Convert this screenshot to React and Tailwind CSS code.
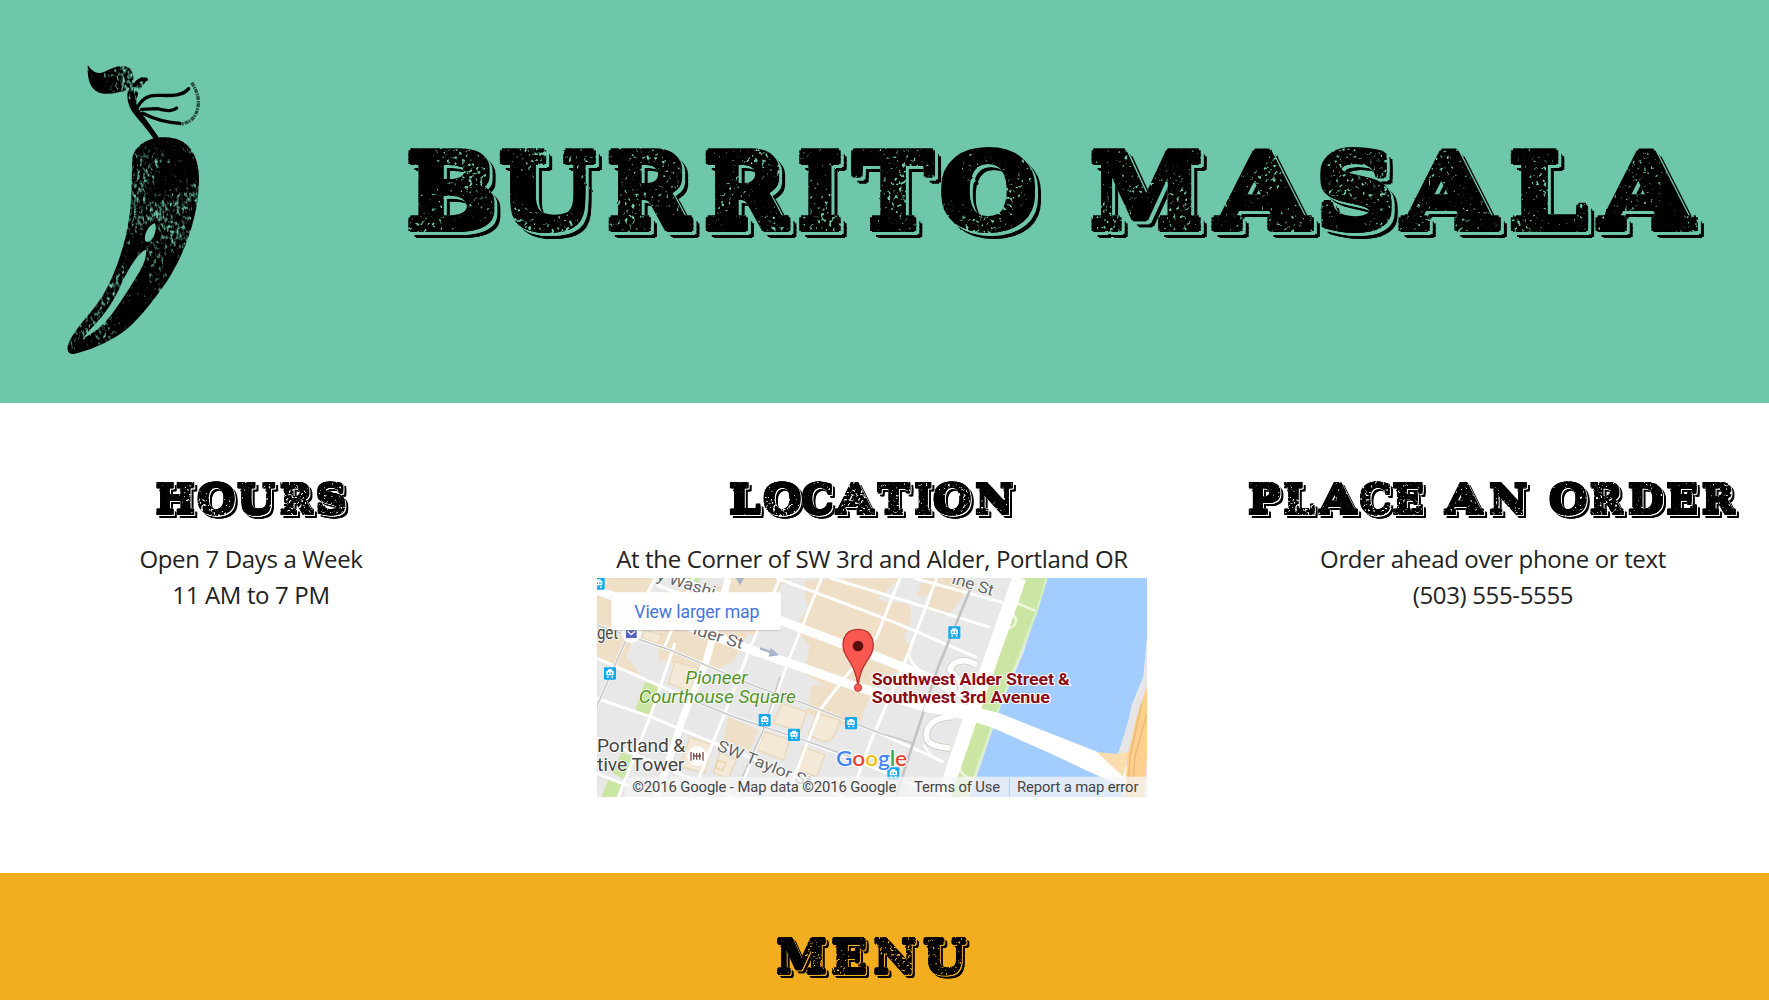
import React from "react";

/* Advance width and horizontal stretch of each display letter, in em. */
const LETTERS = {
  A: "w-[0.913em] scale-x-[1.07]",
  B: "w-[0.728em] scale-x-[0.96]",
  C: "w-[0.72em] scale-x-[0.91]",
  D: "w-[0.87em] scale-x-[0.92]",
  E: "w-[0.75em] scale-x-[0.94]",
  H: "w-[0.934em] scale-x-[0.94]",
  I: "w-[0.45em] scale-x-[0.88]",
  L: "w-[0.804em] scale-x-[1]",
  M: "w-[1.12em] scale-x-[0.9]",
  N: "w-[1.02em] scale-x-[0.94]",
  O: "w-[0.838em] scale-x-[0.99]",
  P: "w-[0.71em] scale-x-[0.97]",
  R: "w-[0.843em] scale-x-[0.89]",
  S: "w-[0.709em] scale-x-[0.98]",
  T: "w-[0.82em] scale-x-[0.96]",
  U: "w-[0.924em] scale-x-[0.98]",
  " ": "w-[0.394em]",
};

function Slab({ text }) {
  return text.split("").map((c, i) => (
    <span key={i} className={"inline-flex justify-center whitespace-pre scale-y-[0.87] " + LETTERS[c]}>
      {c}
    </span>
  ));
}

const slabFont =
  "font-bold text-black whitespace-nowrap leading-none font-['DejaVu_Serif',serif] [text-shadow:0_0.012em_0_#000,0_0.024em_0_#000,0_0.036em_0_#000,0_0.048em_0_#000,0_0.056em_0_#000,0_-0.012em_0_#000,0_-0.024em_0_#000,0_-0.036em_0_#000,0_-0.048em_0_#000,0_-0.056em_0_#000,0.018em_0_0_#000,-0.018em_0_0_#000,0.018em_0.04em_0_#000,-0.018em_-0.04em_0_#000,-0.018em_0.04em_0_#000,0.018em_-0.04em_0_#000]";

function InkFilter({ id, gap, drop, freq, rough, cut }) {
  return (
    <filter id={id} x="-2%" y="-10%" width="104%" height="130%" colorInterpolationFilters="sRGB">
      <feTurbulence type="fractalNoise" baseFrequency="0.15" numOctaves="2" seed="4" result="wobble" />
      <feDisplacementMap in="SourceGraphic" in2="wobble" scale={rough} xChannelSelector="R" yChannelSelector="G" result="body" />
      <feOffset in="body" dx={gap} dy={gap} result="gap" />
      <feOffset in="body" dx={drop} dy={drop} result="drop" />
      <feComposite in="drop" in2="gap" operator="out" result="edge" />
      <feTurbulence type="fractalNoise" baseFrequency={freq} numOctaves="2" seed="9" result="fine" />
      <feColorMatrix in="fine" type="matrix" values="0 0 0 0 0  0 0 0 0 0  0 0 0 0 0  1 0 0 0 0" result="fineA" />
      <feTurbulence type="fractalNoise" baseFrequency="0.025" numOctaves="1" seed="12" result="patch" />
      <feColorMatrix in="patch" type="matrix" values="0 0 0 0 0  0 0 0 0 0  0 0 0 0 0  0 1 0 0 0" result="patchA" />
      <feComposite in="fineA" in2="patchA" operator="arithmetic" k1="0" k2="7" k3="4" k4={cut} result="specks" />
      <feComposite in="body" in2="specks" operator="out" result="worn" />
      <feComposite in="edge" in2="body" operator="out" result="outline" />
      <feMerge>
        <feMergeNode in="outline" />
        <feMergeNode in="worn" />
      </feMerge>
    </filter>
  );
}

function Filters() {
  return (
    <svg className="absolute h-0 w-0" aria-hidden="true">
      <defs>
        <InkFilter id="ink-lg" gap="3" drop="6" freq="0.27" rough="1.6" cut="-6.6" />
        <InkFilter id="ink-sm" gap="1.4" drop="2.6" freq="0.4" rough="0.6" cut="-6.7" />
        <filter id="brush" x="-5%" y="-5%" width="110%" height="110%" colorInterpolationFilters="sRGB">
          <feTurbulence type="fractalNoise" baseFrequency="0.11 0.07" numOctaves="3" seed="3" result="fine" />
          <feColorMatrix in="fine" type="matrix" values="0 0 0 0 0  0 0 0 0 0  0 0 0 0 0  1 0 0 0 0" result="fineA" />
          <feTurbulence type="fractalNoise" baseFrequency="0.009" numOctaves="2" seed="8" result="patch" />
          <feColorMatrix in="patch" type="matrix" values="0 0 0 0 0  0 0 0 0 0  0 0 0 0 0  0 1 0 0 0" result="patchA" />
          <feComposite in="fineA" in2="patchA" operator="arithmetic" k1="0" k2="3" k3="2.6" k4="-2.95" result="specks" />
          <feComposite in="SourceGraphic" in2="specks" operator="out" />
        </filter>
      </defs>
    </svg>
  );
}

function Chili() {
  return (
    <svg className="h-[330px] w-[200px] shrink-0" viewBox="0 0 600 990" role="img" aria-label="Chili pepper">
      <g filter="url(#brush)">
        <path d="M143 74C155 93 170 103 190 97C215 85 245 70 268 84C280 92 280 112 284 134C292 122 300 112 306 111L324 119C306 136 296 152 292 170C288 185 288 194 292 202L300 214L357 293L342 298C322 266 290 234 277 215C264 196 260 175 263 151C238 158 200 166 178 158C158 148 141 132 143 74Z" />
        <path
          fillRule="evenodd"
          d="M277 356C282 318 325 290 377 292C445 293 478 345 477 420C477 520 438 635 381 724C330 797 286 850 248 877C202 910 143 933 102 942C82 945 79 925 86 908C105 865 155 820 189 765C230 695 256 610 268 530C278 465 274 400 277 356ZM344 550C328 554 312 580 315 600C320 614 338 600 343 584C349 570 348 552 344 550ZM318 629C298 635 272 675 249 721C232 762 212 798 184 832C162 858 143 875 130 895C164 878 192 853 216 822C246 780 270 742 291 707C307 683 321 653 318 629Z"
        />
      </g>
      <path d="M284 136C290 124 298 116 318 118M276 160Q278 195 296 216L350 294" fill="none" stroke="black" strokeWidth="11" strokeLinecap="round" />
      <path d="M292 202C310 172 328 166 350 166C385 166 425 172 446 146M305 208L350 206C380 211 394 217 410 204M308 220C340 236 380 249 420 250" fill="none" stroke="black" strokeWidth="10" strokeLinecap="round" />
      <path d="M455 128Q482 170 473 205Q464 248 420 252" fill="none" stroke="black" strokeOpacity="0.6" strokeWidth="10" strokeDasharray="12 3 5 2" />
    </svg>
  );
}

function Transit({ x, y }) {
  return (
    <g transform={`translate(${x} ${y})`}>
      <rect x="-18" y="-18" width="36" height="37" rx="3" fill="#12a9f0" />
      <path d="M-11-8h5v-4h12v4h5v14h-22zM-9 9h5v4h-5zM4 9h5v4h-5z" fill="white" />
      <path d="M-6-3h4v5h-4zM2-3h4v5h-4z" fill="#12a9f0" />
    </g>
  );
}

function FitText({ width, children, ...rest }) {
  return (
    <text textLength={width} lengthAdjust="spacingAndGlyphs" {...rest}>
      {children}
    </text>
  );
}

function Map() {
  return (
    <svg className="mt-px block h-[219px] w-[550px]" viewBox="21 24 1650 657" preserveAspectRatio="none" fontFamily="Roboto, sans-serif">
      <rect x="21" y="24" width="1650" height="657" fill="#e8e8e8" />
      {/* commercial blocks */}
      <g fill="#f0dfc7">
        <path d="M21 24H195L110 260L150 315L21 265ZM205 70L600 24L470 250L380 300L205 270ZM415 24H560L500 190L380 150ZM650 30L930 24L860 90L950 100C975 120 960 170 940 205L965 230L935 300L860 330L800 480L650 430L665 345L710 350L640 310L660 230L620 180Z" />
        <path d="M1000 24H1130L1115 85L1085 125L1060 135L1010 120L1030 70L980 80ZM415 440L505 480L480 545L400 510Z" />
      </g>
      <path d="M575 40L640 60L655 110L610 180L530 150ZM475 190L600 240L560 400L400 330Z" fill="#e8e8e8" />
      <g fill="#f3e9d6" stroke="#e9dbc0" strokeWidth="5">
        <path d="M255 275L325 295L300 365L235 340ZM575 400L650 425L630 485L550 460ZM680 430L750 450Q735 515 700 515L655 495ZM525 485L600 510L580 570L500 540ZM640 530L705 555L680 620L620 600ZM300 500L365 525L345 610L270 590ZM390 545L440 570L415 625L370 610ZM165 180L215 195L205 220L155 205Z" />
      </g>
      <path d="M385 570L408 579L397 602L376 593Z" fill="none" stroke="#e6d3a8" strokeWidth="4" />
      {/* parks */}
      <g fill="#cbe6a3">
        <path d="M165 335L210 350L180 440L135 422ZM290 24H330L322 45L282 35ZM95 545L128 560L103 627L68 610ZM55 625L100 640L85 681H35Z" />
        <path d="M1300 24H1372L1340 122L1270 300L1220 430L1150 620L1130 681H1055L1075 620L1140 450L1195 315Z" />
      </g>
      {/* river */}
      <path d="M1372 24H1671V200L1660 320L1625 405L1610 480L1585 550L1605 650L1610 681H1138L1160 620L1235 400L1300 250Z" fill="#a3ccff" />
      <path d="M1370 24L1338 130L1270 300L1220 430L1145 640" fill="none" stroke="#d9f0c0" strokeWidth="6" />
      <path d="M1671 215L1665 340L1625 420L1585 550L1600 681H1671Z" fill="#e5e5e5" />
      {/* minor streets */}
      <g fill="none" stroke="white" strokeWidth="9">
        <path d="M21 165L240 240L500 350L640 400L870 490L1060 575M21 265L330 400L430 440L640 510L870 600L1000 660M21 385L180 440L400 530L620 620L760 681M21 505L130 550L300 625L430 681M21 610L120 650M560 24L870 140L980 185L1160 262M720 24L840 60L970 100L1200 172M970 24L1240 98M200 45L400 120L560 165" />
        <path d="M195 24L130 160L20 410M255 220L180 440L85 681M570 24L470 260L400 440L340 590L305 681M695 24L600 260L520 480L440 681M930 24L860 200L690 420L590 681M1040 24L955 250L840 520L785 670M310 24L220 240" />
      </g>
      <g fill="none" stroke="white" strokeWidth="21">
        <path d="M415 24L350 270L280 440L200 681M21 60L200 135" />
      </g>
      <g fill="none" stroke="white" strokeWidth="27">
        <path d="M250 24L440 100L580 155L740 215L840 252L1010 320L1160 390" />
        <path d="M21 60L300 170L470 235L600 280L800 350L1000 410L1130 435" />
      </g>
      {/* rail lines */}
      <g fill="none" stroke="#c9c9c9" strokeWidth="5">
        <path d="M21 165L240 240L500 350L640 400L870 490L970 520M130 160L20 410M330 400L430 440L640 510L780 560M570 320L520 480L440 660" />
        <path d="M1140 60L1045 290L940 610L920 681" stroke="#c3c3c3" strokeWidth="8" />
      </g>
      {/* ramps */}
      <g fill="none" stroke="#cfcabf" strokeWidth="22">
        <path d="M1160 285C1120 260 1085 275 1080 300C1095 320 1120 330 1110 370M1090 440C1030 440 1005 470 1010 505C1020 530 1055 530 1080 535" />
      </g>
      <g fill="none" stroke="white" strokeWidth="17">
        <path d="M1160 285C1120 260 1085 275 1080 300C1095 320 1120 330 1110 370M1090 440C1030 440 1005 470 1010 505C1020 530 1055 530 1080 535" />
        <path d="M955 250Q970 310 1050 325M1000 525Q1040 580 1060 575" strokeWidth="7" />
        <path d="M1270 95L1335 122M1240 180C1295 170 1280 135 1260 130M1100 560Q1100 610 1145 630" stroke="#eef6dd" strokeWidth="8" />
      </g>
      {/* waterfront road and bridge */}
      <path d="M1288 24L1195 290L1150 420L1060 681" fill="none" stroke="white" strokeWidth="42" />
      <path d="M1010 375L1170 415L1230 430L1525 547L1610 590V655L1540 625L1380 550L1200 470L1100 440L1000 425Z" fill="white" />
      <path d="M1520 546L1580 552L1615 545L1600 620Z" fill="#fadcae" />
      <path d="M1671 350L1640 440L1612 560L1603 681H1662L1671 560Z" fill="#fbd08c" />
      <path d="M1671 430L1635 560L1625 681M1655 400L1620 560L1612 681" fill="none" stroke="#e7b978" strokeWidth="4" />
      <path d="M510 235L560 253M440 24L455 38" stroke="#a9b3c9" strokeWidth="7" />
      <path d="M542 233L567 256L536 260ZM438 24H462L450 46Z" fill="#a9b3c9" />
      {/* street and place labels */}
      <g fill="#666" stroke="white" strokeWidth="5" paintOrder="stroke" fontSize="48">
        <FitText transform="translate(198 30) rotate(17)" width="180">
          y Washi
        </FitText>
        <FitText transform="translate(306 192) rotate(17)" width="155">
          lder St
        </FitText>
        <FitText transform="translate(1083 40) rotate(17)" width="128">
          ine St
        </FitText>
        <FitText transform="translate(378 540) rotate(22)" width="300">
          SW Taylor St
        </FitText>
      </g>
      <g fill="#444" stroke="white" strokeWidth="5" paintOrder="stroke" fontSize="53">
        <FitText x="21" y="206" width="63">get</FitText>
        <FitText x="21" y="545" width="264">Portland &amp;</FitText>
        <FitText x="21" y="603" width="262">tive Tower</FitText>
      </g>
      <g fill="#559326" stroke="white" strokeWidth="4" paintOrder="stroke" fontSize="54" fontStyle="italic">
        <FitText x="286" y="341" width="186">Pioneer</FitText>
        <FitText x="146" y="399" width="471">Courthouse Square</FitText>
      </g>
      <circle cx="124" cy="190" r="29" fill="white" />
      <path d="M108 178H140V204H108Z" fill="#5561bd" />
      <path d="M113 184L124 194L135 184" fill="none" stroke="white" strokeWidth="4" />
      <circle cx="321" cy="558" r="29" fill="white" />
      <path d="M303 546V572M309 558H333M311 549V569M320 549V569M329 549V569M339 546V572" stroke="#76544e" strokeWidth="4" />
      <Transit x="26" y="40" />
      <Transit x="60" y="310" />
      <Transit x="524" y="450" />
      <Transit x="612" y="494" />
      <Transit x="783" y="459" />
      <Transit x="1093" y="187" />
      <Transit x="910" y="610" />
      {/* Google wordmark */}
      <g stroke="white" strokeWidth="6" paintOrder="stroke">
        <text x="738" y="589" fontSize="65" fontWeight="600" fontFamily="Lato, sans-serif" textLength="213" lengthAdjust="spacingAndGlyphs">
          <tspan fill="#4285f4">G</tspan>
          <tspan fill="#ea4335">o</tspan>
          <tspan fill="#fbbc05">o</tspan>
          <tspan fill="#4285f4">g</tspan>
          <tspan fill="#34a853">l</tspan>
          <tspan fill="#ea4335">e</tspan>
        </text>
      </g>
      {/* attribution strip */}
      <rect x="105" y="620" width="1566" height="61" fill="#f5f5f5" fillOpacity="0.75" />
      <path d="M1258 622V681" stroke="#b5d3f5" strokeWidth="3" />
      <g fill="#444" fontSize="43">
        <FitText x="127" y="665" width="792">©2016 Google - Map data ©2016 Google</FitText>
        <FitText x="972" y="665" width="258">Terms of Use</FitText>
        <FitText x="1281" y="665" width="364">Report a map error</FitText>
      </g>
      {/* pin */}
      <path d="M804 350C800 305 784 283 770 260C750 228 756 178 804 178C852 178 860 228 838 262C822 287 808 305 804 350Z" fill="#f95750" stroke="#b8322c" strokeWidth="4" />
      <circle cx="804" cy="228" r="16" fill="#5b0f0d" />
      <circle cx="804" cy="353" r="11" fill="#f95750" stroke="#c9413b" strokeWidth="3" />
      <g fill="#8b0a14" stroke="white" strokeWidth="6" paintOrder="stroke" fontSize="50" fontWeight="700">
        <FitText x="845" y="346" width="594">Southwest Alder Street &amp;</FitText>
        <FitText x="845" y="398" width="534">Southwest 3rd Avenue</FitText>
      </g>
      {/* larger map button */}
      <rect x="64" y="71" width="509" height="113" rx="6" fill="#999" fillOpacity="0.35" />
      <rect x="64" y="67" width="509" height="113" rx="6" fill="white" />
      <FitText x="133" y="143" fontSize="53" fill="#4374e0" width="375">View larger map</FitText>
    </svg>
  );
}

function Column({ title, children }) {
  return (
    <section className="flex flex-col items-center text-center">
      <h2 className={"text-[45.5px] [filter:url(#ink-sm)] " + slabFont}>
        <Slab text={title} />
      </h2>
      <div className="mt-[18px] text-[24px] leading-[36.4px] tracking-[-0.35px]">{children}</div>
    </section>
  );
}

export default function App() {
  return (
    <div className="h-[1000px] w-[1769px] overflow-hidden bg-white font-['Open_Sans','Noto_Sans',sans-serif] text-[#222]">
      <Filters />
      <header className="flex h-[403px] items-start bg-[#6ec7ab] pl-10 pt-10">
        <Chili />
        <h1 className={"ml-[170px] mt-[94px] text-[115px] [filter:url(#ink-lg)] " + slabFont}>
          <Slab text="BURRITO MASALA" />
        </h1>
      </header>
      <main className="grid h-[470px] grid-cols-[502px_740px_502px] pt-[74px]">
        <Column title="HOURS">
          <p>Open 7 Days a Week</p>
          <p>11 AM to 7 PM</p>
        </Column>
        <Column title="LOCATION">
          <p>At the Corner of SW 3rd and Alder, Portland OR</p>
          <div className="flex justify-center">
            <Map />
          </div>
        </Column>
        <Column title="PLACE AN ORDER">
          <p>Order ahead over phone or text</p>
          <p>(503) 555-5555</p>
        </Column>
      </main>
      <section className="flex h-[127px] justify-center bg-[#f3ae20] pr-[28px] pt-[59px]">
        <h2 className={"text-[51px] [filter:url(#ink-sm)] " + slabFont}>
          <Slab text="MENU" />
        </h2>
      </section>
    </div>
  );
}
